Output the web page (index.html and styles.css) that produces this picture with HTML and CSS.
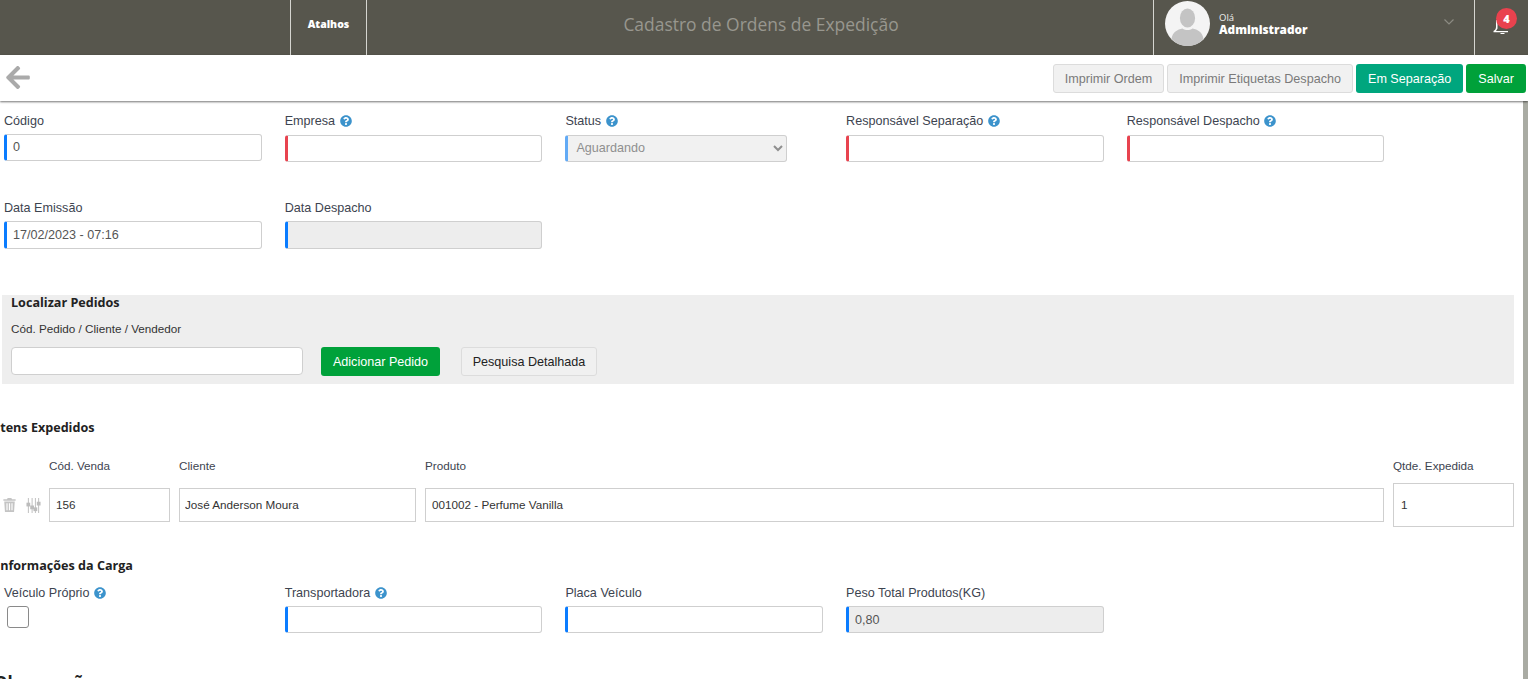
FILE: index.html
```html
<!DOCTYPE html>
<html lang="pt-BR">
<head>
<meta charset="utf-8">
<title>Cadastro de Ordens de Expedição</title>
<link rel="stylesheet" href="styles.css">
</head>
<body>
<svg class="defs" width="0" height="0" aria-hidden="true">
  <symbol id="help" viewBox="0 0 512 512"><path d="M504 256c0 136.997-111.043 248-248 248S8 392.997 8 256C8 119.083 119.043 8 256 8s248 111.083 248 248zM262.655 90c-54.497 0-89.255 22.957-116.549 63.758-3.536 5.286-2.353 12.415 2.715 16.258l34.699 26.31c5.205 3.947 12.621 3.008 16.665-2.122 17.864-22.658 30.113-35.797 57.303-35.797 20.429 0 45.698 13.148 45.698 32.958 0 14.976-12.363 22.667-32.534 33.976C247.128 238.528 216 254.941 216 296v4c0 6.627 5.373 12 12 12h56c6.627 0 12-5.373 12-12v-1.333c0-28.462 83.186-29.647 83.186-106.667 0-58.002-60.165-102-116.531-102zM256 338c-25.365 0-46 20.635-46 46 0 25.364 20.635 46 46 46s46-20.636 46-46c0-25.365-20.635-46-46-46z"/></symbol>
</svg>
<header class="topbar">
  <div class="top-spacer"></div>
  <div class="shortcuts">Atalhos</div>
  <div class="page-title">Cadastro de Ordens de Expedição</div>
  <div class="user">
    <svg class="avatar" viewBox="0 0 45 45"><circle cx="22.5" cy="22.5" r="22.5" fill="#f4f4f4"/><ellipse cx="22.5" cy="17" rx="7.6" ry="9.5" fill="#c4c4c4"/><path d="M6.5 38c1-7 6-9.500 11-10.500 3 2 7 2 10 0 5 1 10 3.500 11 10.500-4 4.500-10 7-16 7s-12-2.500-16-7z" fill="#c4c4c4"/></svg>
    <div class="user-text"><span class="hello">Olá</span><span class="user-name">Administrador</span></div>
    <svg class="chevron" viewBox="0 0 10 6" fill="none" stroke="#8c8b83" stroke-width="1.2"><path d="M.5.5l4.500 4.500 4.500-4.500"/></svg>
  </div>
  <div class="notify">
    <svg class="bell" viewBox="0 0 18 14" fill="#fff"><path d="M3 0h1.500v8.500L3 11h12v1.200H0.500V11C2 10 3 9 3 7z"/><rect x="7.500" y="13" width="4" height="1.500"/></svg>
    <span class="badge">4</span>
  </div>
</header>
<nav class="toolbar">
  <svg class="back" viewBox="0 0 448 512" fill="#aaa"><path d="M257.500 445.100l-22.200 22.200c-9.400 9.400-24.600 9.400-33.900 0L7 273c-9.400-9.400-9.400-24.600 0-33.900L201.400 44.700c9.400-9.400 24.600-9.400 33.900 0l22.200 22.200c9.500 9.500 9.300 25-.4 34.300L136.600 216H424c13.300 0 24 10.700 24 24v32c0 13.300-10.700 24-24 24H136.600l120.500 114.800c9.800 9.300 10 24.800.4 34.300z"/></svg>
  <div class="actions">
    <button class="btn btn-muted">Imprimir Ordem</button>
    <button class="btn btn-muted">Imprimir Etiquetas Despacho</button>
    <button class="btn btn-teal">Em Separação</button>
    <button class="btn btn-green">Salvar</button>
  </div>
</nav>
<div class="page">
  <main class="content">
    <div class="form-grid first-row">
      <div class="field"><label class="label">Código</label><input class="input mark-blue nudge-up" value="0"></div>
      <div class="field"><label class="label">Empresa <svg class="help"><use href="#help"/></svg></label><input class="input mark-red"></div>
      <div class="field"><label class="label">Status <svg class="help"><use href="#help"/></svg></label><select class="input input-select mark-light" disabled><option>Aguardando</option></select></div>
      <div class="field"><label class="label">Responsável Separação <svg class="help"><use href="#help"/></svg></label><input class="input mark-red"></div>
      <div class="field"><label class="label">Responsável Despacho <svg class="help"><use href="#help"/></svg></label><input class="input mark-red"></div>
    </div>
    <div class="form-grid second-row">
      <div class="field"><label class="label">Data Emissão</label><input class="input mark-blue tall" value="17/02/2023 - 07:16"></div>
      <div class="field"><label class="label">Data Despacho</label><input class="input mark-blue tall input-off" disabled></div>
    </div>
    <section class="finder">
      <h2 class="finder-title">Localizar Pedidos</h2>
      <div class="finder-label">Cód. Pedido / Cliente / Vendedor</div>
      <div class="finder-row">
        <input class="finder-input">
        <button class="btn btn-green btn-add">Adicionar Pedido</button>
        <button class="btn btn-plain">Pesquisa Detalhada</button>
      </div>
    </section>
    <h2 class="section-title items-title">Itens Expedidos</h2>
    <div class="items items-head">
      <span></span><span>Cód. Venda</span><span>Cliente</span><span>Produto</span><span>Qtde. Expedida</span>
    </div>
    <div class="items items-row">
      <div class="row-icons">
        <svg class="trash" viewBox="0 0 14 16" fill="#c4c4c4"><path d="M5 0h4l1 1.500h4V3H0V1.500h4zM1 4h12l-.8 12H1.800zM3.500 6v8h1.300V6zm2.800 0v8h1.400V6zm2.900 0v8h1.300V6z"/></svg>
        <svg class="sliders" viewBox="0 0 15 16" fill="#bcbcbc"><rect x="1.500" width="1" height="16"/><rect x="0" y="5" width="4" height="4"/><rect x="5.500" width="1" height="16"/><rect x="4" y="8" width="4" height="4"/><rect x="9" width="1" height="16"/><rect x="7.500" y="10" width="4" height="4"/><rect x="12.500" width="1" height="16"/><rect x="11" y="4" width="4" height="4"/></svg>
      </div>
      <input class="cell" value="156">
      <input class="cell cell-name" value="José Anderson Moura">
      <input class="cell" value="001002 - Perfume Vanilla">
      <input class="cell cell-qty" value="1">
    </div>
    <h2 class="section-title cargo-title">Informações da Carga</h2>
    <div class="form-grid cargo-row">
      <div class="field"><label class="label">Veículo Próprio <svg class="help"><use href="#help"/></svg></label><input class="check" type="checkbox"></div>
      <div class="field"><label class="label">Transportadora <svg class="help"><use href="#help"/></svg></label><input class="input mark-blue"></div>
      <div class="field"><label class="label">Placa Veículo</label><input class="input mark-blue"></div>
      <div class="field"><label class="label">Peso Total Produtos(KG)</label><input class="input mark-blue input-off" value="0,80" disabled></div>
    </div>
    <h2 class="section-title notes-title">Observações</h2>
  </main>
  <div class="edge"></div>
</div>
</body>
</html>
```
FILE: styles.css
```css
* { box-sizing: border-box; }
html, body { margin: 0; height: 679px; overflow: hidden; background: #fff; }
body { font-family: "Liberation Sans", Arial, sans-serif; font-size: 12.6px; color: #3d4450; }
.defs { display: block; height: 0; }

.topbar { display: flex; height: 55px; background: #57564d; color: #fff; }
.top-spacer { width: 290px; }
.shortcuts { width: 77px; border-left: 1px solid #d5d5d0; border-right: 1px solid #d5d5d0; display: flex; align-items: center; justify-content: center; padding-bottom: 8px; font: 800 10.500px "Open Sans", sans-serif; }
.page-title { flex: 1; text-align: center; padding: 12px 0 0 2px; font: 400 17.450px/24px "Open Sans", sans-serif; color: #98978f; }
.user { width: 321px; border-left: 1px solid #d5d5d0; display: flex; align-items: flex-start; padding: 1px 0 0 11px; }
.avatar { width: 45px; height: 45px; flex: none; }
.user-text { display: flex; flex-direction: column; margin: 11px 0 0 9px; width: 225px; }
.hello { font: 400 9.500px/11px "Open Sans", sans-serif; color: #eee; }
.user-name { font: 800 11.800px/13px "Open Sans", sans-serif; color: #fff; }
.chevron { width: 10px; height: 6px; margin-top: 18px; flex: none; }
.notify { width: 54px; border-left: 1px solid #d5d5d0; display: flex; padding: 20px 0 0 18px; position: relative; }
.bell { width: 18px; height: 14px; }
.badge { position: absolute; left: 21px; top: 8px; width: 21px; height: 21px; border-radius: 50%; background: #e9424e; color: #fff; font: 800 11px/21px "Open Sans", sans-serif; text-align: center; }

.toolbar { display: flex; align-items: flex-start; justify-content: space-between; height: 46px; padding: 9px 2px 0 6px; background: #fff; box-shadow: 0 1px 2px rgba(0,0,0,.55); position: relative; }
.back { width: 24px; height: 27px; }
.actions { display: flex; gap: 3px; }
.btn { height: 29px; padding: 0 11px; border: 1px solid transparent; border-radius: 3px; font: 400 12.6px "Liberation Sans", Arial, sans-serif; white-space: nowrap; }
.btn-muted { background: #f1f1f1; border-color: #dcdcdc; color: #7a7a7a; }
.btn-teal { background: #00a67e; color: #fff; }
.btn-green { background: #00a13a; color: #fff; }
.btn-plain { background: #f0f0f0; border-color: #dcdcdc; color: #222; }

.page { display: flex; height: 578px; }
.content { flex: 1; min-width: 0; overflow: hidden; }
.edge { width: 5px; background: #a9aba3; }

.form-grid { display: grid; grid-template-columns: repeat(5, 257.700px); column-gap: 23px; margin-left: 4px; }
.first-row { margin-top: 10px; }
.second-row { margin-top: 36px; }
.cargo-row { margin-top: 7px; }
.cargo-row .label { line-height: 23px; }
.field { display: flex; flex-direction: column; align-items: flex-start; }
.label { height: 24px; line-height: 21px; color: #3d4450; white-space: nowrap; }
.help { width: 12px; height: 12px; fill: #3c93cc; vertical-align: -2px; margin-left: 1px; }
.input { width: 100%; height: 27px; padding: 0 8px 0 6px; border: 1px solid #cfcfcf; border-left-width: 3px; border-radius: 3px; font: 400 12.6px "Liberation Sans", Arial, sans-serif; color: #555; background: #fff; outline: none; }
.nudge-up { margin-top: -1px; padding-bottom: 2px; }
.tall { height: 28px; margin-top: -1px; }
.mark-blue { border-left-color: #0a7cff; }
.mark-red { border-left-color: #e8434f; }
.mark-light { border-left-color: #62aaf5; }
.input-off { background: #ededed; }
.input-select { width: 222px; height: 27px; padding: 0 0 2px 4px; background: #f1f1f1; color: #8f8f8f; opacity: 1; }

.finder { height: 89px; margin: 46px 9px 0 2px; padding: 0 9px; background: #eee; }
.finder-title { margin: 0; font: 700 12.6px/15px "Open Sans", sans-serif; color: #222; }
.finder-label { margin-top: 12px; font-size: 11.700px; line-height: 14px; color: #333; }
.finder-row { display: flex; align-items: flex-start; margin-top: 11px; }
.finder-input { width: 292px; height: 28px; border: 1px solid #cfcfcf; border-radius: 4px; background: #fff; outline: none; }
.btn-add { width: 119px; margin-left: 18px; padding: 0; border-radius: 3px; }
.btn-plain { width: 136px; margin-left: 21px; padding: 0; }

.section-title { margin: 0 0 0 -4px; font: 700 12.6px/18px "Open Sans", sans-serif; color: #222; white-space: nowrap; }
.items-title { margin-top: 35px; }
.items { display: grid; grid-template-columns: 40px 121px 237px 959px 121px; column-gap: 9px; align-items: center; }
.items-head { margin-top: 20px; height: 16px; font-size: 11.700px; color: #3d4450; }
.items-row { margin-top: 10px; height: 44px; }
.row-icons { display: flex; align-items: center; gap: 10px; padding-left: 3px; }
.trash { width: 13px; height: 14px; flex: none; }
.sliders { width: 15px; height: 15px; flex: none; }
.cell { width: 100%; height: 34px; padding: 0 6px 2px; border: 1px solid #cfcfcf; background: #fff; font: 400 11.700px "Liberation Sans", Arial, sans-serif; color: #333; outline: none; }
.cell-name { padding-left: 5px; }
.cell-qty { height: 44px; padding-left: 7px; }

.cargo-title { margin-top: 30px; }
.check { appearance: none; width: 22px; height: 22px; margin: 0 0 0 3px; border: 1px solid #8a8a8a; border-radius: 3px; background: #fff; }
.notes-title { margin: 41px 0 0 -6px; font-size: 17px; }
```
